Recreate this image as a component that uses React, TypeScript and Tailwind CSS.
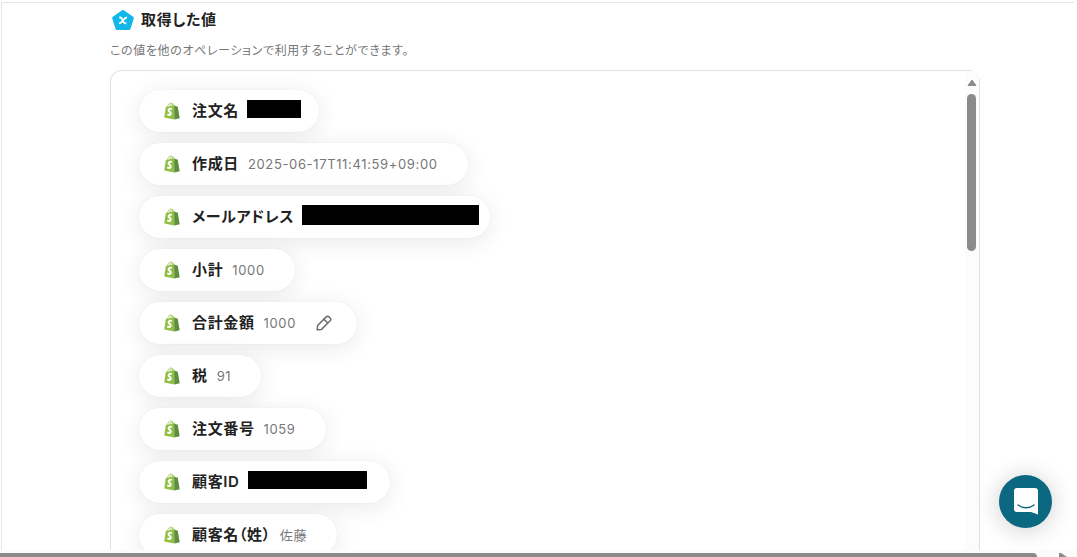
import React from "react";
import clsx from "clsx";

type OutputValue = {
  label: string;
  value?: string;
  maskClass?: string;
  pillClass?: string;
  editable?: boolean;
};

const VALUES: OutputValue[] = [
  { label: "注文名", maskClass: "w-[54px] h-[18px]", pillClass: "pr-[18px]" },
  { label: "作成日", value: "2025-06-17T11:41:59+09:00" },
  { label: "メールアドレス", maskClass: "w-[177px] h-[20px]", pillClass: "pr-[11px]" },
  { label: "小計", value: "1000" },
  { label: "合計金額", value: "1000", editable: true },
  { label: "税", value: "91" },
  { label: "注文番号", value: "1059" },
  { label: "顧客ID", maskClass: "w-[119px] h-[18px]", pillClass: "pr-[23px]" },
  { label: "顧客名（姓）", value: "佐藤" },
];

function ShopifyIcon() {
  return (
    <svg viewBox="0 0 16 18" className="w-4 h-[18px] shrink-0" aria-hidden="true">
      <path d="M3.5 4.8C4 2.600 5.400 1 6.800.9c1.200 0 1.800 1.300 1.900 3M6 4.200C6.500 2.400 7.500 1.300 8.500 1.500c.7.2 1.100 1 1.300 2.200" fill="none" stroke="#a9cf6a" strokeWidth="1" />
      <path d="M1.800 4.900 10.200 3.200 10.400 17.400.3 15.600z" fill="#8fc043" />
      <path d="m10.100 3.200 1.700 1.100 1.900.3 2 11.600-5.400 1.200z" fill="#5e8e3e" />
      <path d="M7.800 7c-1.500-.7-3.200-.1-3.200 1.200 0 1.600 2.200 1.700 2.100 3.400-.1 1.500-1.900 1.700-3.400.8" fill="none" stroke="#fff" strokeWidth="2" />
    </svg>
  );
}

function VariableIcon() {
  return (
    <svg viewBox="0 0 24 24" className="w-6 h-6 shrink-0" aria-hidden="true">
      <path d="M12 3.500 21.300 10 18 20.500H6L2.700 10z" fill="#12b7ea" stroke="#12b7ea" strokeWidth="3" strokeLinejoin="round" />
      <path d="M8.300 9.500h1c.9 0 1.300.5 1.700 1.300l1.500 3.200c.4.8.8 1.300 1.700 1.300h1.200M16 9.500c-1.200 0-1.900.6-2.800 1.500l-2.500 2.800c-.8.9-1.500 1.500-2.700 1.500" fill="none" stroke="#fff" strokeWidth="1.800" />
    </svg>
  );
}

function PencilIcon() {
  return (
    <svg viewBox="0 0 16 16" className="w-4 h-4" fill="none" stroke="#6b6b6b" strokeWidth="1.500" strokeLinecap="round" strokeLinejoin="round" aria-hidden="true">
      <path d="M1.200 14.800 1.600 10.500 10.200 1.900a2 2 0 0 1 2.800 0l1.100 1.100a2 2 0 0 1 0 2.800L5.500 14.400zM8.200 4.500l3.300 3.300" />
    </svg>
  );
}

function ValuePill({ item }: { item: OutputValue }) {
  return (
    <li
      className={clsx(
        "flex shrink-0 items-center h-[42px] rounded-full bg-white pl-[25px] shadow-[0_4px_24px_rgba(0,0,0,0.09),0_0_2px_rgba(0,0,0,0.06)]",
        item.pillClass ?? (item.editable ? "pr-[25px]" : "pr-[30px]")
      )}
    >
      <ShopifyIcon />
      <span className="ml-3 text-[15px] leading-6 font-semibold text-[#222]">{item.label}</span>
      {item.maskClass && <span className={clsx("ml-2 mb-1 bg-black", item.maskClass)} />}
      {item.value && (
        <span className="ml-[9px] text-[13px] leading-5 text-[#777]">{item.value}</span>
      )}
      {item.editable && (
        <button type="button" aria-label="編集" className="ml-5 cursor-pointer">
          <PencilIcon />
        </button>
      )}
    </li>
  );
}

export default function App() {
  return (
    <div className="relative h-screen flex flex-col overflow-hidden bg-white pt-[2px] font-[Inter,'Noto_Sans_CJK_JP',sans-serif] tracking-[0.04em] [font-feature-settings:'palt']">
      <main className="flex-1 min-h-0 flex flex-col overflow-hidden border-t border-l border-[#e6e6e6] ml-px mr-[3px] pl-[108px] pr-[94px]">
        <header>
          <h1 className="flex items-center gap-[6px] h-[34px] pl-px text-[15px] leading-6 font-semibold text-[#222]">
            <VariableIcon />
            取得した値
          </h1>
          <p className="mt-1 h-[29px] text-xs leading-5 text-[#777]">
            この値を他のオペレーションで利用することができます。
          </p>
        </header>

        <section className="flex-1 min-h-0 flex rounded-t-xl border border-b-0 border-[#e0e0e0]">
          <ul className="flex-1 min-w-0 flex flex-col items-start gap-[11px] pt-[19px] pl-7">
            {VALUES.map((item) => (
              <ValuePill key={item.label} item={item} />
            ))}
          </ul>
          {/* scrollbar */}
          <div className="w-[14px] flex flex-col items-center bg-[#fcfcfc] pt-2 pr-px">
            <svg viewBox="0 0 10 7" className="w-[10px] h-[7px]" aria-hidden="true">
              <path d="M5 1 9 6.500H1z" fill="#8b8b8b" stroke="#8b8b8b" strokeLinejoin="round" />
            </svg>
            <div className="mt-2 w-[9px] h-[157px] shrink-0 rounded-full bg-[#8b8b8b]" />
          </div>
        </section>
      </main>

      <div className="flex items-end h-[7px] shrink-0 bg-[#fbfbfb]">
        <div className="flex-1 h-1 rounded-tr bg-[#8b8b8b]" />
        <svg viewBox="0 0 18 4" className="w-[18px] h-1 ml-[22px]" aria-hidden="true">
          <path d="M0 0h2l6 4H0z" fill="#8b8b8b" />
        </svg>
      </div>

      <button
        type="button"
        aria-label="チャットを開く"
        className="absolute right-[25px] bottom-[29px] w-[53px] h-[53px] flex items-center justify-center rounded-full bg-[#0b6880] shadow-[0_2px_24px_rgba(0,0,0,0.2)] cursor-pointer"
      >
        <svg viewBox="0 0 24 27" className="w-6 h-[27px]" aria-hidden="true">
          <path d="M3 0h18a3 3 0 0 1 3 3v23.500L17 24H3a3 3 0 0 1-3-3V3a3 3 0 0 1 3-3z" fill="#fff" />
          <path d="M4 17c4.500 3.600 11.500 3.600 16 0" fill="none" stroke="#0b6880" strokeWidth="1.500" strokeLinecap="round" />
        </svg>
      </button>
    </div>
  );
}
